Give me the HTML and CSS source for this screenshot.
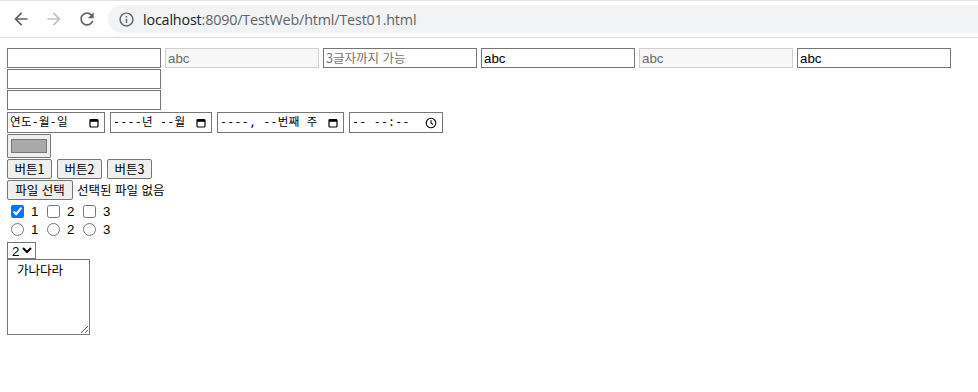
FILE: index.html
```html
<!DOCTYPE html>
<html lang="ko">
<head>
<meta charset="utf-8">
<title>Test01</title>
<link rel="stylesheet" href="styles.css">
</head>
<body>
<header class="chrome">
  <div class="nav">
    <svg class="navicon back" viewBox="0 0 24 24"><path d="M20 11H7.83l5.59-5.59L12 4l-8 8 8 8 1.41-1.41L7.83 13H20v-2z"/></svg>
    <svg class="navicon fwd" viewBox="0 0 24 24"><path d="M12 4l-1.41 1.41L16.17 11H4v2h12.17l-5.58 5.59L12 20l8-8z"/></svg>
    <svg class="navicon reload" viewBox="0 0 24 24"><path d="M17.65 6.35C16.2 4.9 14.21 4 12 4c-4.42 0-7.99 3.58-7.99 8s3.57 8 7.99 8c3.73 0 6.84-2.55 7.73-6h-2.08c-.82 2.33-3.04 4-5.65 4-3.31 0-6-2.69-6-6s2.69-6 6-6c1.66 0 3.14.69 4.22 1.78L13 11h7V4l-2.35 2.35z"/></svg>
  </div>
  <div class="omnibox">
    <svg class="info" viewBox="0 0 24 24"><path d="M11 7h2v2h-2zm0 4h2v6h-2zm1-9C6.48 2 2 6.48 2 12s4.48 10 10 10 10-4.48 10-10S17.52 2 12 2zm0 18c-4.41 0-8-3.59-8-8s3.59-8 8-8 8 3.59 8 8-3.59 8-8 8z"/></svg>
    <span class="url"><span class="host">localhost</span>:8090/TestWeb/html/Test01.html</span>
  </div>
</header>

<main class="page">
  <div class="row trow">
    <input class="txt" type="text">
    <input class="txt" type="text" value="abc" disabled>
    <input class="txt" type="text" placeholder="3글자까지 가능">
    <input class="txt" type="text" value="abc">
    <input class="txt" type="text" value="abc" disabled>
    <input class="txt" type="text" value="abc">
  </div>
  <div class="row trow"><input class="txt" type="password"></div>
  <div class="row trow"><input class="txt" type="text"></div>

  <div class="row dates">
    <span class="fake date w-date"><span class="ph">연도-월-일</span><svg class="cal" viewBox="0 0 10 10"><rect x="1" y="1.5" width="8" height="7.5" rx="1" fill="none" stroke="#000" stroke-width="1.2"/><rect x="1" y="1.5" width="8" height="2.3" fill="#000"/></svg></span>
    <span class="fake date w-month"><span class="ph">----년 --월</span><svg class="cal" viewBox="0 0 10 10"><rect x="1" y="1.5" width="8" height="7.5" rx="1" fill="none" stroke="#000" stroke-width="1.2"/><rect x="1" y="1.5" width="8" height="2.3" fill="#000"/></svg></span>
    <span class="fake date w-week"><span class="ph">----, --번째 주</span><svg class="cal" viewBox="0 0 10 10"><rect x="1" y="1.5" width="8" height="7.5" rx="1" fill="none" stroke="#000" stroke-width="1.2"/><rect x="1" y="1.5" width="8" height="2.3" fill="#000"/></svg></span>
    <span class="fake date w-time"><span class="ph">-- --:--</span><svg class="clock" viewBox="0 0 12 12"><circle cx="6" cy="6" r="4.8" fill="none" stroke="#000" stroke-width="1.1"/><path d="M6 3.2V6l2 1.6" fill="none" stroke="#000" stroke-width="1.1"/></svg></span>
  </div>

  <div class="row"><span class="colorbtn"><span class="swatch"></span></span></div>

  <div class="row btns">
    <button class="btn" type="button">버튼1</button>
    <button class="btn" type="button">버튼2</button>
    <button class="btn" type="button">버튼3</button>
  </div>

  <div class="row file">
    <span class="btn filebtn">파일 선택</span>
    <span class="filetxt">선택된 파일 없음</span>
  </div>

  <div class="row opts">
    <label class="opt"><input type="checkbox" checked> 1</label>
    <label class="opt"><input type="checkbox"> 2</label>
    <label class="opt"><input type="checkbox"> 3</label>
  </div>
  <div class="row opts">
    <label class="opt"><input type="radio" name="r"> 1</label>
    <label class="opt"><input type="radio" name="r"> 2</label>
    <label class="opt"><input type="radio" name="r"> 3</label>
  </div>

  <div class="row sel">
    <select class="select"><option>1</option><option selected>2</option><option>3</option></select>
  </div>

  <div class="row"><textarea class="area">가나다라</textarea></div>
</main>
</body>
</html>
```
FILE: styles.css
```css
* { box-sizing: border-box; }
html, body { margin: 0; padding: 0; background: #fff; }
body { font-family: "Liberation Sans", "Noto Sans CJK KR", sans-serif; color: #000; }

.chrome {
  height: 38px;
  border-top: 1px solid #e3e3e3;
  border-bottom: 1px solid #dadce0;
  display: flex;
  align-items: center;
  background: #fff;
}
.nav { display: flex; align-items: center; padding-left: 11px; gap: 13px; }
.navicon { width: 20px; height: 20px; }
.back { fill: #5f6368; }
.fwd { fill: #bdc1c6; }
.reload { fill: #5f6368; }
.omnibox {
  margin-left: 11px;
  flex: 1;
  height: 28px;
  border-radius: 14px 0 0 14px;
  background: #f1f3f4;
  display: flex;
  align-items: center;
  padding-left: 10px;
}
.info { width: 17px; height: 17px; fill: #5f6368; }
.url {
  margin-left: 8px;
  font-family: "Open Sans", "Liberation Sans", sans-serif;
  font-size: 14.3px;
  color: #5f6368;
  letter-spacing: -0.15px;
}
.host { color: #202124; }

.page { padding: 10px 0 0 7px; display: flex; flex-direction: column; }
.row { display: flex; align-items: center; gap: 4px; }
.trow { margin-bottom: 1px; }

.txt {
  width: 154px;
  height: 20px;
  margin: 0;
  border: 1px solid #767676;
  border-radius: 0;
  padding: 1px 2px;
  font-family: "Liberation Sans", "Noto Sans CJK KR", sans-serif;
  font-size: 13.33px;
  color: #000;
  background: #fff;
  outline: none;
}
.txt:disabled { background: #f7f7f7; border-color: #d0d0d0; color: #6d6d6d; }
.txt::placeholder { color: #757575; font-family: "Noto Sans CJK KR", sans-serif; font-size: 12.5px; }

.dates { gap: 5px; margin-top: 1px; }
.fake {
  height: 21px;
  border: 1px solid #767676;
  display: flex;
  align-items: center;
  justify-content: space-between;
  padding: 0 5px 0 2px;
  background: #fff;
}
.ph { font-family: "DejaVu Sans Mono", "Noto Sans CJK KR", monospace; font-size: 11.5px; letter-spacing: 0.3px; white-space: pre; line-height: 1; }
.w-date { width: 98px; }
.w-month { width: 102px; }
.w-week { width: 127px; }
.w-time { width: 94px; }
.cal { width: 10px; height: 10px; }
.clock { width: 12px; height: 12px; }

.colorbtn {
  margin-top: 1px;
  width: 44px;
  height: 24px;
  border: 1px solid #767676;
  border-radius: 1px;
  background: #efefef;
  display: flex;
  align-items: center;
  justify-content: center;
}
.swatch { width: 36px; height: 14px; background: #a9a9a9; border: 1px solid #777; }

.btns { gap: 5px; margin-top: 1px; }
.btn {
  height: 20px;
  margin: 0;
  padding: 0 6px;
  border: 1px solid #767676;
  border-radius: 2px;
  background: #efefef;
  font-family: "Noto Sans CJK KR", sans-serif;
  font-size: 12.5px;
  color: #000;
  line-height: 18px;
  display: inline-flex;
  align-items: center;
}
.btns .btn { width: 45px; justify-content: center; padding: 0; }
.file { margin-top: 1px; gap: 4px; }
.filebtn { width: 66px; justify-content: center; padding: 0; }
.filetxt { font-family: "Noto Sans CJK KR", sans-serif; font-size: 12.5px; line-height: 18px; }

.opts { gap: 0; height: 18px; margin-top: 2px; }
.opt { display: inline-flex; align-items: center; font-family: "Liberation Sans", sans-serif; font-size: 13.33px; width: 36px; }
.opt input { margin: 0 7px 0 4px; width: 13px; height: 13px; }
.opts + .opts { margin-top: 0; }

.sel { margin-top: 4px; }
.select {
  width: 29px;
  height: 17px;
  margin: 0;
  padding: 0;
  border: 1px solid #767676;
  border-radius: 0;
  font-family: "Liberation Sans", sans-serif;
  font-size: 13.33px;
  background: #fff;
}

.area {
  margin: 0;
  width: 83px;
  height: 76px;
  border: 1px solid #767676;
  padding: 2px 2px 2px 9px;
  font-family: "Noto Sans CJK KR", monospace;
  font-size: 12.5px;
  line-height: 16px;
  resize: both;
}
```
